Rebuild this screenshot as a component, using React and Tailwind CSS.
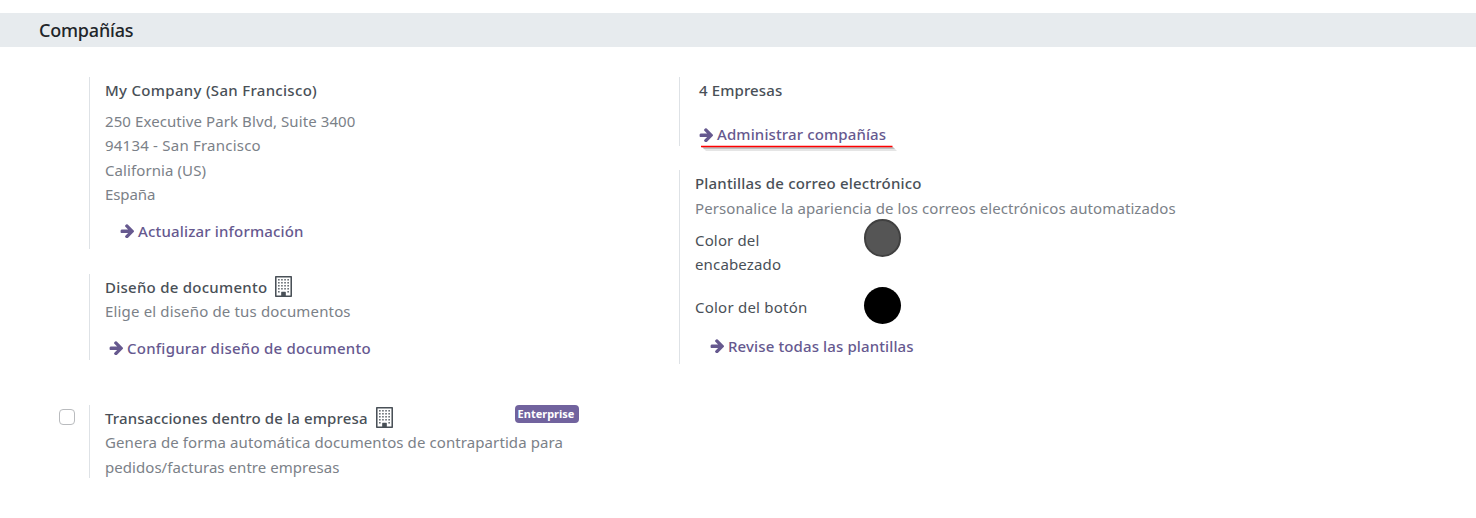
const ARROW =
  "M1600 960q0 54-37 91l-651 651q-39 37-91 37-51 0-90-37l-75-75q-38-38-38-91t38-91l293-293h-704q-52 0-84.5-37.5t-32.5-90.5v-128q0-53 32.5-90.5t84.5-37.5h704l-293-294q-38-36-38-90t38-90l75-75q38-38 90-38 53 0 91 38l651 651q37 35 37 90z";

function ActionLink({ className = "", textClass = "tracking-[0.16px]", children }) {
  return (
    <a href="#" className={`flex h-6 items-center gap-1 font-[550] text-[#66598f] ${className}`}>
      <svg viewBox="64 160 1536 1536" className="size-3.5 shrink-0" fill="currentColor" aria-hidden="true">
        <path d={ARROW} />
      </svg>
      <span className={textClass}>{children}</span>
    </a>
  );
}

function BuildingIcon() {
  const windows = [];
  for (const y of [256, 512, 768, 1024, 1280]) {
    for (const x of [448, 704, 960, 1216]) {
      if (y < 1280 || x === 448 || x === 1216) windows.push([x, y]);
    }
  }
  return (
    <svg viewBox="192 0 1408 1792" className="-mt-0.5 h-[21px] w-[17px] shrink-0 text-[#495057]" preserveAspectRatio="none" fill="currentColor" aria-hidden="true">
      <path fillRule="evenodd" d="M256 0h1280q64 0 64 64v1664q0 64-64 64H256q-64 0-64-64V64q0-64 64-64zM320 128v1536h384v-288q0-32 32-32h320q32 0 32 32v288h384V128z" />
      {windows.map(([x, y]) => <rect key={`${x}-${y}`} x={x} y={y} width="128" height="128" rx="32" />)}
    </svg>
  );
}

export default function App() {
  return (
    <main className="h-[518px] w-full overflow-hidden bg-white pt-[13px] font-['Noto_Sans',sans-serif] text-[15px] leading-[24.5px] whitespace-nowrap text-[#495057]">
      <h2 className="flex h-[34px] items-center bg-[#e7ebee] pl-[39px] text-[18px] font-medium tracking-[-0.2px] text-[#212529]">
        <span>Compañías</span>
      </h2>
      <div className="flex pt-[30px]">
        <div className="w-[679px] pl-[89px]">
          <section className="h-[172px] border-l border-[#dee2e6] pt-px pl-[15px]">
            <h3 className="font-medium tracking-[0.3px]"><span>My Company (San Francisco)</span></h3>
            <address className="mt-[6px] tracking-[0.09px] text-[#7b8188] not-italic">
              <span>250 Executive Park Blvd, Suite 3400</span><br />
              <span className="tracking-[0.22px]">94134 - San Francisco</span><br />
              <span>California (US)</span><br />
              <span className="tracking-[-0.1px]">España</span>
            </address>
            <ActionLink className="mt-[12.5px] ml-[15px]">Actualizar información</ActionLink>
          </section>
          <section className="mt-[25px] h-[86px] border-l border-[#dee2e6] pt-px pl-[15px]">
            <h3 className="flex items-center gap-2 font-medium tracking-[0.25px]"><span>Diseño de documento</span><BuildingIcon /></h3>
            <p className="-mt-[0.5px] tracking-[0.16px] text-[#7b8188]"><span>Elige el diseño de tus documentos</span></p>
            <ActionLink className="mt-[12.5px] ml-1" textClass="tracking-[0.23px]">Configurar diseño de documento</ActionLink>
          </section>
          <div className="mt-[45px] flex">
            <input type="checkbox" className="mt-1 mr-[14px] -ml-[30px] size-4 appearance-none rounded-[4px] border border-[#b9bbbe] bg-white" />
            <section className="h-[73px] w-[490px] border-l border-[#dee2e6] pt-px pl-[15px]">
              <div className="flex">
                <h3 className="flex w-[410px] items-center gap-2 font-medium tracking-[0.14px]"><span>Transacciones dentro de la empresa</span><BuildingIcon /></h3>
                <span className="-mt-px flex h-[18px] w-16 items-center justify-center rounded-[4px] bg-[#71639e] pr-0.5 pb-px text-[11px] leading-[17px] font-bold text-white">Enterprise</span>
              </div>
              <p className="-mt-[0.5px] tracking-[0.09px] text-[#7b8188]">
                <span>Genera de forma automática documentos de contrapartida para</span><br />
                <span className="tracking-[0.05px]">pedidos/facturas entre empresas</span>
              </p>
            </section>
          </div>
        </div>
        <div className="flex-1">
          <section className="h-[69px] border-l border-[#dee2e6] pt-px pl-[19px]">
            <h3 className="font-medium tracking-[0.12px]"><span>4 Empresas</span></h3>
            <div className="relative mt-5">
              <ActionLink textClass="tracking-[0.12px]">Administrar compañías</ActionLink>
              <svg className="absolute top-[22px] left-0 h-2 w-[200px]" viewBox="0 0 200 8" aria-hidden="true">
                <path d="M3 2H194L198 6H7z" fill="#999" opacity=".25" />
                <path d="M3 2H194L196 4H5z" fill="#888" opacity=".4" />
                <path d="M2 1.500H193.500" stroke="#ff0000" strokeWidth="1.4" />
              </svg>
            </div>
          </section>
          <section className="mt-6 h-[194px] border-l border-[#dee2e6] pt-px pl-[15px]">
            <h3 className="font-medium tracking-[0.18px]"><span>Plantillas de correo electrónico</span></h3>
            <p className="tracking-[0.09px] text-[#7b8188]"><span>Personalice la apariencia de los correos electrónicos automatizados</span></p>
            <div className="flex h-[68px]">
              <label className="mt-2 w-[169px] leading-6 tracking-[0.15px]"><span>Color del</span><br /><span>encabezado</span></label>
              <span className="-mt-px h-[38px] w-[37px] rounded-full border-2 border-[#404040] bg-[#555]" />
            </div>
            <div className="flex h-[46px]">
              <label className="mt-[7px] w-[169px] tracking-[0.23px]"><span>Color del botón</span></label>
              <span className="-mt-px size-[37px] rounded-full bg-black" />
            </div>
            <ActionLink className="ml-[15px]" textClass="tracking-[0.12px]">Revise todas las plantillas</ActionLink>
          </section>
        </div>
      </div>
    </main>
  );
}
